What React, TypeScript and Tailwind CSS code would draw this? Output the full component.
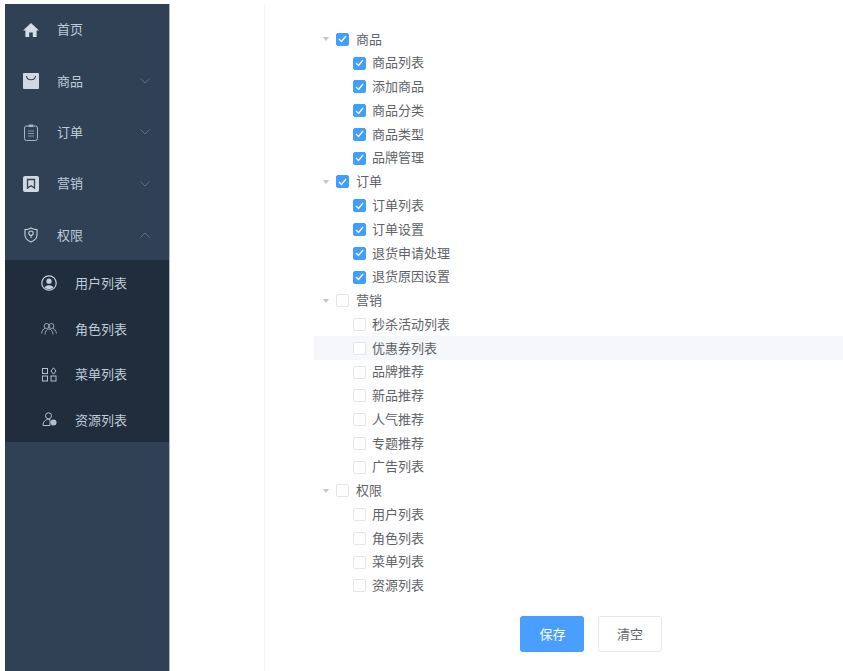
import React from 'react';

const font = { fontFamily: '"Noto Sans CJK SC", "Noto Sans", sans-serif' };

function HomeIcon() {
    return (
        <svg width="16" height="16" viewBox="0 0 16 16" fill="#d5dde6">
            <path d="M8 1 L16 8.6 H13.6 V15 H9.8 V10.4 H6.2 V15 H2.4 V8.6 H0 Z" />
        </svg>
    );
}

function BagIcon() {
    return (
        <svg width="16" height="16" viewBox="0 0 16 16">
            <rect width="16" height="16" rx="1" fill="#cfd8e3" />
            <path d="M3.5 3 C4 8 12 8 12.5 3" fill="none" stroke="#304156" strokeWidth="1.1" />
        </svg>
    );
}

function ClipboardIcon() {
    return (
        <svg width="16" height="17" viewBox="0 0 16 17" fill="none" stroke="#aab5c2" strokeWidth="1">
            <rect x="1.5" y="2" width="13" height="14.5" rx="2" />
            <path d="M6 1 H10 V2.5 H6 Z" fill="#aab5c2" />
            <path d="M5 7 H11 M5 9.5 H11 M5 12 H11" stroke="#8793a2" />
        </svg>
    );
}

function BookmarkIcon() {
    return (
        <svg width="16" height="16" viewBox="0 0 16 16">
            <rect width="16" height="16" rx="2" fill="#cfd8e3" />
            <path d="M4.5 3.5 H11.5 V12 L8 9.8 L4.5 12 Z" fill="none" stroke="#304156" strokeWidth="1.3" />
        </svg>
    );
}

function ShieldIcon() {
    return (
        <svg width="16" height="16" viewBox="0 0 16 16" fill="none" stroke="#c6d0db" strokeWidth="1.1">
            <path d="M8 1 C10 2.2 12 2.6 14 2.6 V8 C14 11.5 11 13.8 8 15 C5 13.8 2 11.5 2 8 V2.6 C4 2.6 6 2.2 8 1 Z" />
            <circle cx="8" cy="6.2" r="2.2" />
            <path d="M8 8.4 V11" />
        </svg>
    );
}

function UserCircleIcon() {
    return (
        <svg width="16" height="16" viewBox="0 0 16 16">
            <circle cx="8" cy="8" r="7.2" fill="none" stroke="#c6d0db" strokeWidth="1.2" />
            <circle cx="8" cy="6.2" r="2.6" fill="#c6d0db" />
            <path d="M3.6 12.4 C5 9.6 11 9.6 12.4 12.4 C10 14.4 6 14.4 3.6 12.4 Z" fill="#c6d0db" />
        </svg>
    );
}

function PeopleIcon() {
    return (
        <svg width="16" height="12" viewBox="0 0 16 12" fill="none" stroke="#a9b4c1" strokeWidth="0.9">
            <circle cx="5.6" cy="3" r="2.5" />
            <circle cx="10.4" cy="3" r="2.5" />
            <path d="M0.6 10.5 C1 7.5 2.4 6 4 5.4 M15.4 10.5 C15 7.5 13.6 6 12 5.4 M4 11.5 C4 8.5 6 6 8 6 C10 6 12 8.5 12 11.5" />
        </svg>
    );
}

function GridIcon() {
    return (
        <svg width="15" height="15" viewBox="0 0 15 15" fill="none" stroke="#b5bfcb" strokeWidth="1">
            <rect x="0.5" y="1.5" width="5" height="5" />
            <path d="M11.5 0.8 L14 4 L11.5 7.2 L9 4 Z" />
            <rect x="0.5" y="9" width="5" height="5" />
            <rect x="9" y="9" width="5" height="5" />
        </svg>
    );
}

function UserLockIcon() {
    return (
        <svg width="15" height="14" viewBox="0 0 15 14" className="translate-y-[-1px]">
            <circle cx="6.5" cy="3.8" r="3" fill="none" stroke="#b5bfcb" strokeWidth="1" />
            <path d="M1 13.5 C1 9.5 3.5 7.5 6.5 7.5 H8 V13.5 Z" fill="none" stroke="#b5bfcb" strokeWidth="1" />
            <circle cx="11.5" cy="10.5" r="3" fill="#b5bfcb" />
        </svg>
    );
}

function Chevron({ up }: { up?: boolean }) {
    return (
        <svg width="10" height="6" viewBox="0 0 10 6" fill="none" stroke="#5f6e80" strokeWidth="1" className="absolute right-[19px] top-1/2 -translate-y-1/2">
            <path d={up ? 'M0.5 5.5 L5 1 L9.5 5.5' : 'M0.5 0.5 L5 5 L9.5 0.5'} />
        </svg>
    );
}

const menu = [
    { label: '首页', icon: <HomeIcon /> },
    { label: '商品', icon: <BagIcon />, arrow: 'down' },
    { label: '订单', icon: <ClipboardIcon />, arrow: 'down' },
    { label: '营销', icon: <BookmarkIcon />, arrow: 'down' },
    { label: '权限', icon: <ShieldIcon />, arrow: 'up' },
];

const submenu = [
    { label: '用户列表', icon: <UserCircleIcon /> },
    { label: '角色列表', icon: <PeopleIcon /> },
    { label: '菜单列表', icon: <GridIcon /> },
    { label: '资源列表', icon: <UserLockIcon /> },
];

const tree = [
    { label: '商品', checked: true, items: ['商品列表', '添加商品', '商品分类', '商品类型', '品牌管理'] },
    { label: '订单', checked: true, items: ['订单列表', '订单设置', '退货申请处理', '退货原因设置'] },
    { label: '营销', checked: false, items: ['秒杀活动列表', '优惠券列表', '品牌推荐', '新品推荐', '人气推荐', '专题推荐', '广告列表'] },
    { label: '权限', checked: false, items: ['用户列表', '角色列表', '菜单列表', '资源列表'] },
];

function Checkbox({ checked }: { checked: boolean }) {
    return (
        <span className={`flex h-[13px] w-[13px] shrink-0 items-center justify-center rounded-[2px] border ${checked ? 'border-[#409eff] bg-[#409eff]' : 'border-[#e2e5eb] bg-white'}`}>
            {checked && (
                <svg width="9" height="8" viewBox="0 0 9 8" fill="none" stroke="#ffffff" strokeWidth="1.2">
                    <path d="M1 4 L3.5 6.5 L8 1" />
                </svg>
            )}
        </span>
    );
}

function TreeRow({ label, checked, child, hover }: { label: string; checked: boolean; child?: boolean; hover?: boolean }) {
    return (
        <div className={`flex h-[23.78px] items-center text-[13px] text-[#606266] ${child ? 'pl-[39px]' : 'pl-[9px]'} ${hover ? 'bg-[#f5f7fa]' : ''}`}>
            {!child && (
                <svg width="6" height="4" viewBox="0 0 6 4" className="mr-[7px]" fill="#c0c4cc">
                    <path d="M0 0 H6 L3 4 Z" />
                </svg>
            )}
            <Checkbox checked={checked} />
            <span className={child ? 'ml-[6px] pb-[2px]' : 'ml-[7px] pb-[2px]'}>{label}</span>
        </div>
    );
}

export default function App() {
    return (
        <div className="flex h-[671px] w-[843px] overflow-hidden bg-white pt-[4px] pl-[5px]" style={font}>
            <aside className="flex w-[165px] shrink-0 flex-col border-r border-[#aeb8c4] bg-[#304156]">
                {menu.map((item) => (
                    <div key={item.label} className="relative flex h-[51.3px] items-center pl-[18px] text-[13px] text-[#bfcbd9]">
                        <span className="flex w-[16px] justify-center">{item.icon}</span>
                        <span className="ml-[18px] pb-[1px]">{item.label}</span>
                        {item.arrow && <Chevron up={item.arrow === 'up'} />}
                    </div>
                ))}
                <div className="bg-[#1f2d3d]">
                    {submenu.map((item) => (
                        <div key={item.label} className="flex h-[45.5px] items-center pl-[36px] text-[13px] text-[#bfcbd9]">
                            <span className="flex w-[16px] justify-center">{item.icon}</span>
                            <span className="ml-[18px]">{item.label}</span>
                        </div>
                    ))}
                </div>
            </aside>
            <main className="ml-[94px] flex-1 border-l border-[#f3f6f6] pt-[23.5px]">
                <div className="ml-[49px]">
                    {tree.map((group) => (
                        <div key={group.label}>
                            <TreeRow label={group.label} checked={group.checked} />
                            {group.items.map((name) => (
                                <TreeRow key={name} label={name} checked={group.checked} child hover={name === '优惠券列表'} />
                            ))}
                        </div>
                    ))}
                </div>
                <div className="mt-[18px] ml-[255px] flex gap-[14px] text-[13px]">
                    <button className="h-[36px] w-[64px] rounded-[3px] bg-[#4a9eff] pl-[1px] text-white">保存</button>
                    <button className="h-[36px] w-[64px] rounded-[3px] border border-[#e4e7ed] bg-white text-[#606266]">清空</button>
                </div>
            </main>
        </div>
    );
}
